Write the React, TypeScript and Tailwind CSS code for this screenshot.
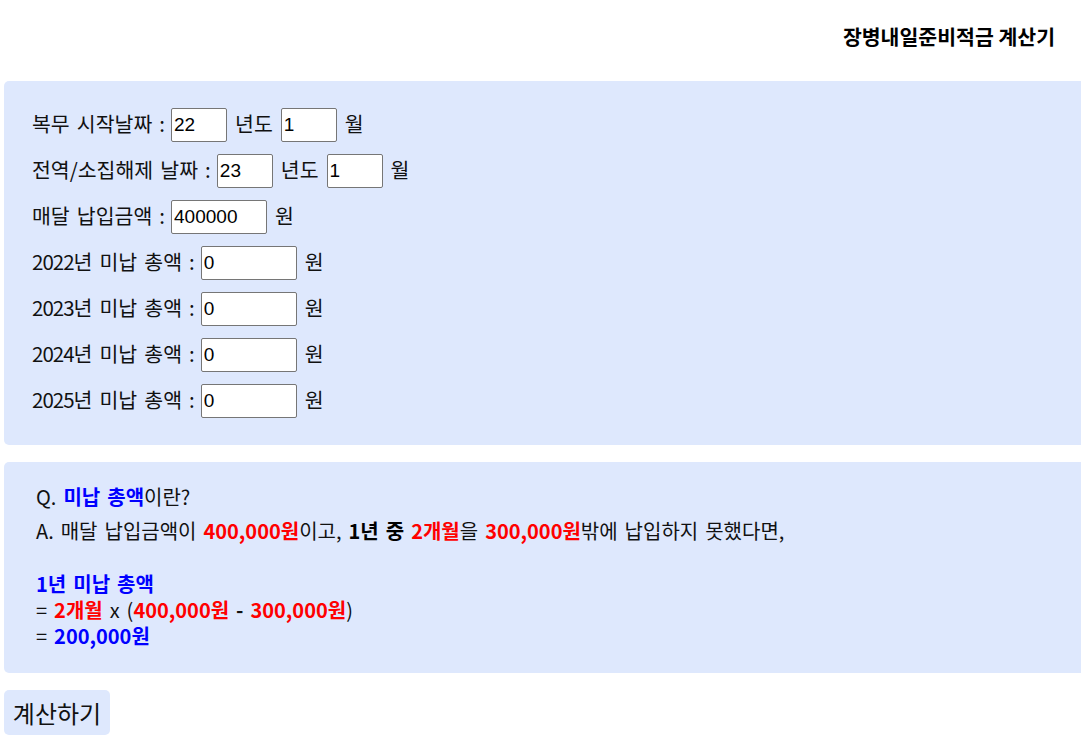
import React from "react";

const font = { fontFamily: '"Noto Sans CJK KR", "Noto Sans", sans-serif' };

function Input({ value, w }: { value: string; w: string }) {
  return (
    <input
      defaultValue={value}
      className={`${w} h-[34px] border border-[#767676] rounded-[2px] bg-white px-[2px] text-[19px] text-black outline-none`}
      style={{ fontFamily: '"Liberation Sans", Arial, sans-serif' }}
    />
  );
}

function Row({ children }: { children: React.ReactNode }) {
  return (
    <div className="flex items-center h-[34px] text-[20.5px] text-[#111] whitespace-pre [word-spacing:2.5px]">
      {children}
    </div>
  );
}

function L({ children, className = "" }: { children: React.ReactNode; className?: string }) {
  return <span className={`mb-[3px] ${className}`}>{children}</span>;
}

export default function App() {
  return (
    <div className="w-full overflow-hidden bg-white pb-[8px]" style={font}>
      <div className="flex justify-end pr-[26px] pt-[21px] h-[81px]">
        <h1 className="text-[20.5px] font-bold leading-[30px] text-black">장병내일준비적금 계산기</h1>
      </div>
      <div className="ml-[4px] bg-[#dee8fd] rounded-l-[5px] pl-[28px] py-[27px] flex flex-col gap-[12px]">
        <Row>
          <L>복무 시작날짜 :</L>
          <Input value="22" w="w-[56px] ml-[6px]" />
          <L className="ml-[8px] mr-[8px]">년도</L>
          <Input value="1" w="w-[56px]" />
          <L className="ml-[8px]">월</L>
        </Row>
        <Row>
          <L>전역/소집해제 날짜 :</L>
          <Input value="23" w="w-[56px] ml-[6px]" />
          <L className="ml-[8px] mr-[8px]">년도</L>
          <Input value="1" w="w-[56px]" />
          <L className="ml-[8px]">월</L>
        </Row>
        <Row>
          <L>매달 납입금액 :</L>
          <Input value="400000" w="w-[96px] ml-[6px]" />
          <L className="ml-[8px]">원</L>
        </Row>
        {["2022", "2023", "2024", "2025"].map((y) => (
          <Row key={y}>
            <L>
              <span className="tracking-[-1px]">{y}</span>년 미납 총액 :
            </L>
            <Input value="0" w="w-[96px] ml-[6px]" />
            <L className="ml-[8px]">원</L>
          </Row>
        ))}
      </div>
      <div className="ml-[4px] mt-[17px] bg-[#dee8fd] rounded-l-[5px] pl-[32px] pt-[21px] pb-[20px] h-[211px] text-[20px] text-[#111] [word-spacing:2.5px]">
        <p className="leading-[28px]">
          Q. <b className="text-[#0000ff]">미납 총액</b>이란?
        </p>
        <p className="leading-[28px] mt-[6px]">
          A. 매달 납입금액이 <b className="text-[#ff0000]">400,000원</b>이고, <b className="text-black">1년 중</b>{" "}
          <b className="text-[#ff0000]">2개월</b>을 <b className="text-[#ff0000]">300,000원</b>밖에 납입하지 못했다면,
        </p>
        <div className="leading-[26px] mt-[26px]">
          <div>
            <b className="text-[#0000ff]">1년 미납 총액</b>
          </div>
          <div>
            = <b className="text-[#ff0000]">2개월</b> x (<b className="text-[#ff0000]">400,000원</b> <b>-</b>{" "}
            <b className="text-[#ff0000]">300,000원</b>)
          </div>
          <div>
            = <b className="text-[#0000ff]">200,000원</b>
          </div>
        </div>
      </div>
      <button className="ml-[4px] mt-[17px] h-[45px] w-[106px] bg-[#dee8fd] rounded-[5px] text-[24px] text-[#111] leading-[28px]">
        계산하기
      </button>
    </div>
  );
}
